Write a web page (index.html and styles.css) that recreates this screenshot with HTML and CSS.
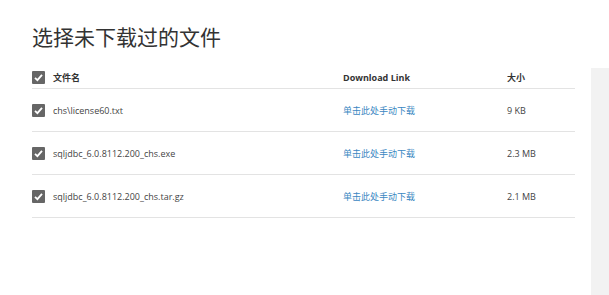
FILE: index.html
```html
<!DOCTYPE html>
<html lang="zh">
<head>
<meta charset="utf-8">
<link rel="stylesheet" href="styles.css">
</head>
<body>
<div class="page">
  <main class="main">
    <h1 class="title">选择未下载过的文件</h1>
    <div class="table">
      <div class="row head">
        <div class="cell name"><span class="cb"><svg viewBox="0 0 13 13"><path d="M3 6.8 L5.4 9.2 L10 3.8" /></svg></span><span>文件名</span></div>
        <div class="cell">Download Link</div>
        <div class="cell">大小</div>
      </div>
      <div class="row">
        <div class="cell name"><span class="cb"><svg viewBox="0 0 13 13"><path d="M3 6.8 L5.4 9.2 L10 3.8" /></svg></span><span>chs\license60.txt</span></div>
        <div class="cell"><a class="link" href="#">单击此处手动下载</a></div>
        <div class="cell">9 KB</div>
      </div>
      <div class="row">
        <div class="cell name"><span class="cb"><svg viewBox="0 0 13 13"><path d="M3 6.8 L5.4 9.2 L10 3.8" /></svg></span><span>sqljdbc_6.0.8112.200_chs.exe</span></div>
        <div class="cell"><a class="link" href="#">单击此处手动下载</a></div>
        <div class="cell">2.3 MB</div>
      </div>
      <div class="row">
        <div class="cell name"><span class="cb"><svg viewBox="0 0 13 13"><path d="M3 6.8 L5.4 9.2 L10 3.8" /></svg></span><span>sqljdbc_6.0.8112.200_chs.tar.gz</span></div>
        <div class="cell"><a class="link" href="#">单击此处手动下载</a></div>
        <div class="cell">2.1 MB</div>
      </div>
    </div>
  </main>
  <aside class="side"></aside>
</div>
</body>
</html>
```
FILE: styles.css
```css
html, body {
  margin: 0;
  padding: 0;
  background: #fff;
}
body {
  font-family: "Open Sans", "Noto Sans CJK SC", sans-serif;
  color: #444;
}
.page {
  display: flex;
  width: 609px;
  height: 295px;
  overflow: hidden;
}
.main {
  width: 543px;
  padding-left: 32px;
  padding-right: 16px;
}
.title {
  margin: 24px 0 0 0;
  font-family: "Noto Sans CJK SC", sans-serif;
  font-weight: 400;
  font-size: 21px;
  line-height: 24px;
  color: #333;
}
.table {
  margin-top: 18px;
}
.row {
  display: grid;
  grid-template-columns: 311px 164px 1fr;
  align-items: center;
  height: 42px;
  border-bottom: 1px solid #e3e3e3;
  font-size: 9px;
}
.row.head {
  height: 22px;
  font-weight: 700;
  color: #333;
}
.cell {
  display: flex;
  align-items: center;
}
.name {
  gap: 8px;
}
.cb {
  width: 13px;
  height: 13px;
  background: #666;
  border-radius: 1px;
  display: block;
  flex: none;
}
.cb svg {
  width: 13px;
  height: 13px;
  display: block;
  fill: none;
  stroke: #fff;
  stroke-width: 1.8;
}
.link {
  color: #3b87c2;
  text-decoration: none;
}
.side {
  margin-top: 68px;
  width: 18px;
  flex: none;
  background: #f2f2f2;
}
```
